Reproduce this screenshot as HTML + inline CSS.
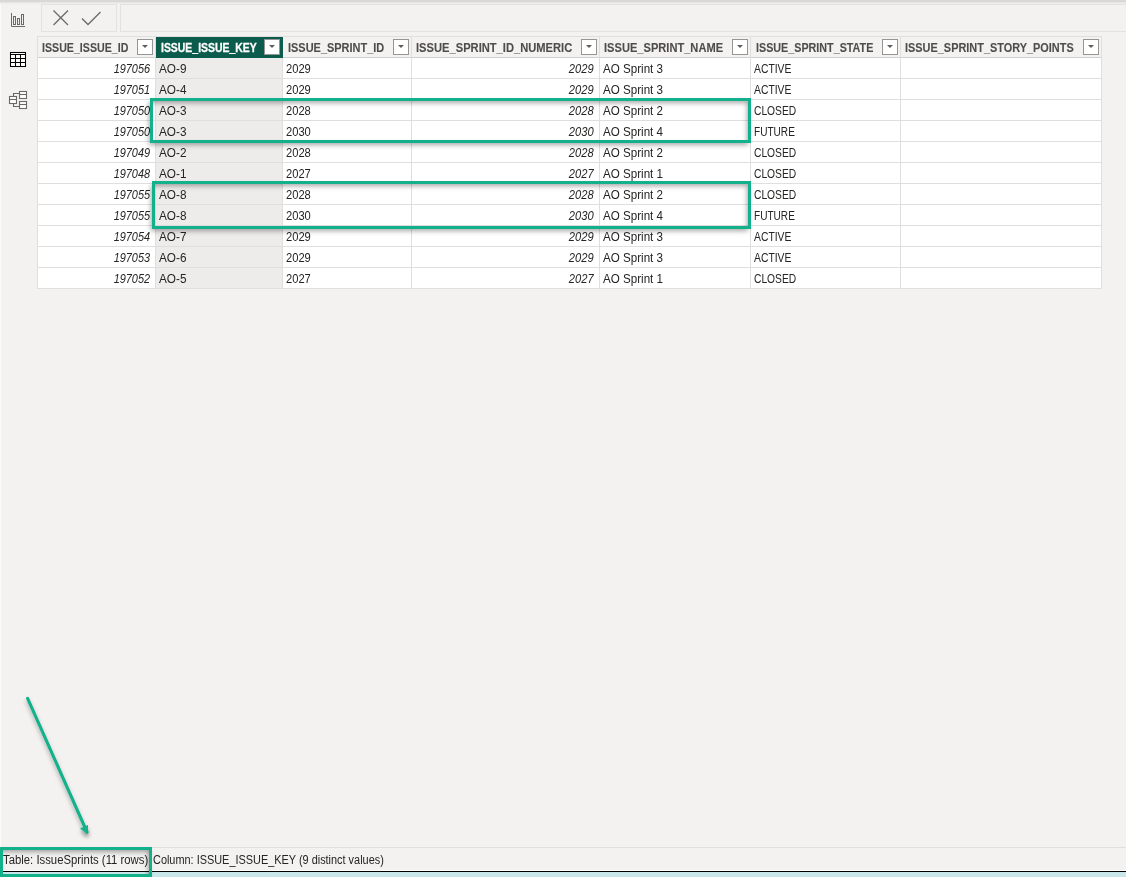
<!DOCTYPE html>
<html><head><meta charset="utf-8">
<style>
*{margin:0;padding:0;box-sizing:border-box}
html,body{width:1126px;height:877px;overflow:hidden;background:#f3f2f1;font-family:"Liberation Sans",sans-serif}
body{position:relative}
.a{position:absolute}
.topband{left:0;top:0;width:1126px;height:4px;background:linear-gradient(#d9d8d6 0,#d9d8d6 1.5px,#eeedeb 3px,#eeedeb 4px)}
.side{left:0;top:4px;width:1px;height:843px;background:#fbfbfb}
.tb{top:4px;height:28px;border:1px solid #e3e2e0}
.hdr{background:#f3f2f1}
.hb{background:#d2d0ce}
.rl{background:#e1dfdd}
.vl{background:#e1dfdd}
.selc{background:#eeeceb}
.selh{background:#0b5c4c}
.t{position:absolute;font-size:12px;line-height:14px;white-space:nowrap;color:#252423;transform-origin:0 50%}
.tr{transform-origin:100% 50%}
.i{font-style:italic}
.h{font-weight:bold;color:#4f4d4b;-webkit-text-stroke:0.1px currentColor}
.hs{color:#fff;-webkit-text-stroke:0.3px #fff}
.dd{top:39px;width:16px;height:16px;border:1px solid #979593;background:#fff}
.dd i{position:absolute;left:4px;top:5px;width:0;height:0;border-left:3px solid transparent;border-right:3px solid transparent;border-top:3px solid #605e5c}
.gbox{border:3px solid #12b08b;box-shadow:-2px 3px 5px -1px rgba(0,0,0,.34),inset -2px 3px 5px -1px rgba(0,0,0,.34)}
.sep{left:0;top:847px;width:1126px;height:1px;background:#e1dfdd}
.st{position:absolute;font-size:12px;line-height:14px;white-space:nowrap;color:#252423;transform-origin:0 50%}

</style></head><body>
<div class="a topband"></div>
<div class="a side"></div>
<div class="a tb" style="left:41px;width:76px"></div>
<div class="a tb" style="left:120px;width:1010px"></div>
<svg class="a" style="left:0;top:0" width="120" height="32">
  <path d="M53.5 10.5 L68 25 M68 10.5 L53.5 25" stroke="#6b6967" stroke-width="1.25" fill="none"/>
  <path d="M82 18.5 L88 24.5 L100.5 12" stroke="#6b6967" stroke-width="1.25" fill="none"/>
</svg>
<svg class="a" style="left:0;top:0" width="36" height="120">
  <g fill="none" stroke="#6b6967" stroke-width="1">
    <path d="M11.5 13 V26.5 H25"/>
    <rect x="13.5" y="16.5" width="2" height="8"/>
    <rect x="17.5" y="18.5" width="2" height="6"/>
    <rect x="21.5" y="14.5" width="2" height="10"/>
  </g>
  <g fill="none" stroke="#000" stroke-width="1.05">
    <rect x="10.5" y="52.5" width="15" height="14" fill="#fff"/>
    <path d="M10.5 54.5 H25.5 M10.5 58.5 H25.5 M10.5 62.5 H25.5 M15.5 54.5 V66.5 M20.5 54.5 V66.5"/>
  </g>
  <g fill="none" stroke="#6b6967" stroke-width="1.1">
    <rect x="9.5" y="96.5" width="7" height="7" fill="#fff"/>
    <path d="M9.5 99.5 H16.5"/>
    <rect x="19.5" y="91.5" width="7" height="7" fill="#fff"/>
    <path d="M19.5 94.5 H26.5"/>
    <rect x="19.5" y="101.5" width="7" height="7" fill="#fff"/>
    <path d="M19.5 104.5 H26.5"/>
    <path d="M13.5 96.5 V93.5 H19.5 M13.5 103.5 V106.5 H19.5"/>
  </g>
</svg>
<div class="a sep"></div>
<span class="st" style="left:3px;top:853px;transform:scaleX(0.944)">Table: IssueSprints (11 rows)</span>
<span class="st" style="left:153px;top:853px;transform:scaleX(0.909)">Column: ISSUE_ISSUE_KEY (9 distinct values)</span>
<div class="a" style="left:0;top:870px;width:1126px;height:1px;background:#fff"></div>
<div class="a" style="left:0;top:871px;width:1126px;height:1px;background:#000"></div>
<div class="a" style="left:0;top:872px;width:1126px;height:5px;background:#c9e6ea"></div>
<div class="a" style="left:37px;top:36px;width:1065px;height:253px;background:#fff;border:1px solid #e1dfdd"></div>
<div class="a hdr" style="left:38px;top:37px;width:1063px;height:20px"></div>
<div class="a selc" style="left:156px;top:58px;width:127px;height:230px"></div>
<div class="a hb" style="left:38px;top:57px;width:1063px;height:1px"></div>
<div class="a rl" style="left:38px;top:78px;width:1063px;height:1px"></div>
<div class="a rl" style="left:38px;top:99px;width:1063px;height:1px"></div>
<div class="a rl" style="left:38px;top:120px;width:1063px;height:1px"></div>
<div class="a rl" style="left:38px;top:141px;width:1063px;height:1px"></div>
<div class="a rl" style="left:38px;top:162px;width:1063px;height:1px"></div>
<div class="a rl" style="left:38px;top:183px;width:1063px;height:1px"></div>
<div class="a rl" style="left:38px;top:204px;width:1063px;height:1px"></div>
<div class="a rl" style="left:38px;top:225px;width:1063px;height:1px"></div>
<div class="a rl" style="left:38px;top:246px;width:1063px;height:1px"></div>
<div class="a rl" style="left:38px;top:267px;width:1063px;height:1px"></div>
<div class="a rl" style="left:38px;top:288px;width:1063px;height:1px"></div>
<div class="a vl" style="left:155px;top:37px;width:1px;height:251px"></div>
<div class="a vl" style="left:282px;top:37px;width:1px;height:251px"></div>
<div class="a vl" style="left:411px;top:37px;width:1px;height:251px"></div>
<div class="a vl" style="left:599px;top:37px;width:1px;height:251px"></div>
<div class="a vl" style="left:750px;top:37px;width:1px;height:251px"></div>
<div class="a vl" style="left:900px;top:37px;width:1px;height:251px"></div>
<div class="a selh" style="left:156px;top:37px;width:127px;height:21px"></div>
<span class="t h" style="left:42px;top:41px;transform:scaleX(0.887)">ISSUE_ISSUE_ID</span>
<div class="a dd" style="left:137px"><i></i></div>
<span class="t h hs" style="left:161px;top:41px;transform:scaleX(0.87)">ISSUE_ISSUE_KEY</span>
<div class="a dd" style="left:264px"><i></i></div>
<span class="t h" style="left:288px;top:41px;transform:scaleX(0.913)">ISSUE_SPRINT_ID</span>
<div class="a dd" style="left:393px"><i></i></div>
<span class="t h" style="left:416px;top:41px;transform:scaleX(0.93)">ISSUE_SPRINT_ID_NUMERIC</span>
<div class="a dd" style="left:581px"><i></i></div>
<span class="t h" style="left:604px;top:41px;transform:scaleX(0.925)">ISSUE_SPRINT_NAME</span>
<div class="a dd" style="left:732px"><i></i></div>
<span class="t h" style="left:756px;top:41px;transform:scaleX(0.896)">ISSUE_SPRINT_STATE</span>
<div class="a dd" style="left:882px"><i></i></div>
<span class="t h" style="left:905px;top:41px;transform:scaleX(0.91)">ISSUE_SPRINT_STORY_POINTS</span>
<div class="a dd" style="left:1083px"><i></i></div>
<span class="t i tr" style="right:976px;top:62px;transform:scaleX(0.909)">197056</span>
<span class="t" style="left:159px;top:62px;transform:scaleX(0.98)">AO-9</span>
<span class="t" style="left:286px;top:62px;transform:scaleX(0.93)">2029</span>
<span class="t i tr" style="right:532.5px;top:62px;transform:scaleX(0.93)">2029</span>
<span class="t" style="left:603px;top:62px;transform:scaleX(0.967)">AO Sprint 3</span>
<span class="t" style="left:754px;top:62px;transform:scaleX(0.863)">ACTIVE</span>
<span class="t i tr" style="right:976px;top:83px;transform:scaleX(0.909)">197051</span>
<span class="t" style="left:159px;top:83px;transform:scaleX(0.98)">AO-4</span>
<span class="t" style="left:286px;top:83px;transform:scaleX(0.93)">2029</span>
<span class="t i tr" style="right:532.5px;top:83px;transform:scaleX(0.93)">2029</span>
<span class="t" style="left:603px;top:83px;transform:scaleX(0.967)">AO Sprint 3</span>
<span class="t" style="left:754px;top:83px;transform:scaleX(0.863)">ACTIVE</span>
<span class="t i tr" style="right:976px;top:104px;transform:scaleX(0.909)">197050</span>
<span class="t" style="left:159px;top:104px;transform:scaleX(0.98)">AO-3</span>
<span class="t" style="left:286px;top:104px;transform:scaleX(0.93)">2028</span>
<span class="t i tr" style="right:532.5px;top:104px;transform:scaleX(0.93)">2028</span>
<span class="t" style="left:603px;top:104px;transform:scaleX(0.967)">AO Sprint 2</span>
<span class="t" style="left:754px;top:104px;transform:scaleX(0.855)">CLOSED</span>
<span class="t i tr" style="right:976px;top:125px;transform:scaleX(0.909)">197050</span>
<span class="t" style="left:159px;top:125px;transform:scaleX(0.98)">AO-3</span>
<span class="t" style="left:286px;top:125px;transform:scaleX(0.93)">2030</span>
<span class="t i tr" style="right:532.5px;top:125px;transform:scaleX(0.93)">2030</span>
<span class="t" style="left:603px;top:125px;transform:scaleX(0.967)">AO Sprint 4</span>
<span class="t" style="left:754px;top:125px;transform:scaleX(0.84)">FUTURE</span>
<span class="t i tr" style="right:976px;top:146px;transform:scaleX(0.909)">197049</span>
<span class="t" style="left:159px;top:146px;transform:scaleX(0.98)">AO-2</span>
<span class="t" style="left:286px;top:146px;transform:scaleX(0.93)">2028</span>
<span class="t i tr" style="right:532.5px;top:146px;transform:scaleX(0.93)">2028</span>
<span class="t" style="left:603px;top:146px;transform:scaleX(0.967)">AO Sprint 2</span>
<span class="t" style="left:754px;top:146px;transform:scaleX(0.855)">CLOSED</span>
<span class="t i tr" style="right:976px;top:167px;transform:scaleX(0.909)">197048</span>
<span class="t" style="left:159px;top:167px;transform:scaleX(0.98)">AO-1</span>
<span class="t" style="left:286px;top:167px;transform:scaleX(0.93)">2027</span>
<span class="t i tr" style="right:532.5px;top:167px;transform:scaleX(0.93)">2027</span>
<span class="t" style="left:603px;top:167px;transform:scaleX(0.967)">AO Sprint 1</span>
<span class="t" style="left:754px;top:167px;transform:scaleX(0.855)">CLOSED</span>
<span class="t i tr" style="right:976px;top:188px;transform:scaleX(0.909)">197055</span>
<span class="t" style="left:159px;top:188px;transform:scaleX(0.98)">AO-8</span>
<span class="t" style="left:286px;top:188px;transform:scaleX(0.93)">2028</span>
<span class="t i tr" style="right:532.5px;top:188px;transform:scaleX(0.93)">2028</span>
<span class="t" style="left:603px;top:188px;transform:scaleX(0.967)">AO Sprint 2</span>
<span class="t" style="left:754px;top:188px;transform:scaleX(0.855)">CLOSED</span>
<span class="t i tr" style="right:976px;top:209px;transform:scaleX(0.909)">197055</span>
<span class="t" style="left:159px;top:209px;transform:scaleX(0.98)">AO-8</span>
<span class="t" style="left:286px;top:209px;transform:scaleX(0.93)">2030</span>
<span class="t i tr" style="right:532.5px;top:209px;transform:scaleX(0.93)">2030</span>
<span class="t" style="left:603px;top:209px;transform:scaleX(0.967)">AO Sprint 4</span>
<span class="t" style="left:754px;top:209px;transform:scaleX(0.84)">FUTURE</span>
<span class="t i tr" style="right:976px;top:230px;transform:scaleX(0.909)">197054</span>
<span class="t" style="left:159px;top:230px;transform:scaleX(0.98)">AO-7</span>
<span class="t" style="left:286px;top:230px;transform:scaleX(0.93)">2029</span>
<span class="t i tr" style="right:532.5px;top:230px;transform:scaleX(0.93)">2029</span>
<span class="t" style="left:603px;top:230px;transform:scaleX(0.967)">AO Sprint 3</span>
<span class="t" style="left:754px;top:230px;transform:scaleX(0.863)">ACTIVE</span>
<span class="t i tr" style="right:976px;top:251px;transform:scaleX(0.909)">197053</span>
<span class="t" style="left:159px;top:251px;transform:scaleX(0.98)">AO-6</span>
<span class="t" style="left:286px;top:251px;transform:scaleX(0.93)">2029</span>
<span class="t i tr" style="right:532.5px;top:251px;transform:scaleX(0.93)">2029</span>
<span class="t" style="left:603px;top:251px;transform:scaleX(0.967)">AO Sprint 3</span>
<span class="t" style="left:754px;top:251px;transform:scaleX(0.863)">ACTIVE</span>
<span class="t i tr" style="right:976px;top:272px;transform:scaleX(0.909)">197052</span>
<span class="t" style="left:159px;top:272px;transform:scaleX(0.98)">AO-5</span>
<span class="t" style="left:286px;top:272px;transform:scaleX(0.93)">2027</span>
<span class="t i tr" style="right:532.5px;top:272px;transform:scaleX(0.93)">2027</span>
<span class="t" style="left:603px;top:272px;transform:scaleX(0.967)">AO Sprint 1</span>
<span class="t" style="left:754px;top:272px;transform:scaleX(0.855)">CLOSED</span>
<div class="a gbox" style="left:150px;top:98px;width:601px;height:45px"></div>
<div class="a gbox" style="left:152px;top:181px;width:599px;height:48px"></div>
<div class="a gbox" style="left:0px;top:847px;width:152px;height:30px"></div>
<svg class="a" style="left:0;top:680px;overflow:visible" width="120" height="170">
  <defs><filter id="sh" x="-50%" y="-50%" width="200%" height="200%"><feDropShadow dx="0" dy="3" stdDeviation="2" flood-color="#000" flood-opacity=".3"/></filter></defs>
  <g filter="url(#sh)" stroke="#12b08b" stroke-width="3.1" fill="none" stroke-linecap="round">
    <path d="M27.6 18.3 L87 152"/>
  </g>
  <path d="M80 148.5 L87.8 154.3 L88 145 Z" fill="#12b08b" filter="url(#sh)"/>
</svg>
</body></html>
